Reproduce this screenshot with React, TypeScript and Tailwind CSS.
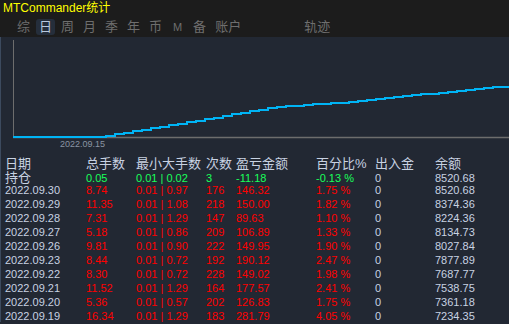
const rows: [string, string, string, string, string, string, string][] = [
  ["2022.09.30", "8.74", "0.01 | 0.97", "176", "146.32", "1.75 %", "8520.68"],
  ["2022.09.29", "11.35", "0.01 | 1.08", "218", "150.00", "1.82 %", "8374.36"],
  ["2022.09.28", "7.31", "0.01 | 1.29", "147", "89.63", "1.10 %", "8224.36"],
  ["2022.09.27", "5.18", "0.01 | 0.86", "209", "106.89", "1.33 %", "8134.73"],
  ["2022.09.26", "9.81", "0.01 | 0.90", "222", "149.95", "1.90 %", "8027.84"],
  ["2022.09.23", "8.44", "0.01 | 0.72", "192", "190.12", "2.47 %", "7877.89"],
  ["2022.09.22", "8.30", "0.01 | 0.72", "228", "149.02", "1.98 %", "7687.77"],
  ["2022.09.21", "11.52", "0.01 | 1.29", "164", "177.57", "2.41 %", "7538.75"],
  ["2022.09.20", "5.36", "0.01 | 0.57", "202", "126.83", "1.75 %", "7361.18"],
  ["2022.09.19", "16.34", "0.01 | 1.29", "183", "281.79", "4.05 %", "7234.35"],
];

const tabs = ["综", "日", "周", "月", "季", "年", "币", "M", "备", "账户"];

const font = { fontFamily: '"Liberation Sans", "Noto Sans CJK SC", sans-serif' };

// equity curve, in page coordinates (chart top = 37)
const knots: [number, number][] = [
  [106, 137],
  [150, 130],
  [285, 107],
  [350, 102.5],
  [509, 86.5],
];

function yAt(x: number) {
  for (let i = 0; i < knots.length - 1; i++) {
    const [x0, y0] = knots[i];
    const [x1, y1] = knots[i + 1];
    if (x >= x0 && x <= x1) return y0 + ((y1 - y0) * (x - x0)) / (x1 - x0);
  }
  return knots[knots.length - 1][1];
}

function stepPath() {
  let d = `M13 ${137 - 37} H106`;
  for (let x = 106; x < 509; x += 9) {
    const y = Math.round(yAt(x + 9)) - 37;
    d += ` V${y} H${Math.min(x + 9, 509)}`;
  }
  return d;
}

const grid =
  "grid grid-cols-[81px_50px_70px_30px_80px_59px_60px_1fr] h-[14px] items-center whitespace-nowrap";

export default function App() {
  return (
    <div className="w-[509px] h-[324px] overflow-hidden bg-[#222833]" style={font}>
      {/* top bar */}
      <div className="h-[37px] bg-[#1c1c1c] px-[3px]">
        <div className="text-[12px] leading-[17px] text-[#ffff00]">MTCommander统计</div>
        <div className="mt-[2px] flex items-center text-[13px] leading-[16px] text-[#6e6e6e]">
          <div className="flex items-center gap-[3px] pl-[11px]">
            {tabs.map((t) => (
              <span
                key={t}
                className={
                  t === "日"
                    ? "rounded-[3px] bg-[#252e3b] px-[3px] text-[#b9c9de]"
                    : t === "M"
                      ? "w-[19px] text-center text-[11px]"
                      : "px-[3px]"
                }
              >
                {t}
              </span>
            ))}
          </div>
          <span className="ml-[60px]">轨迹</span>
        </div>
      </div>

      <div className="border-l border-[#3c4a5e]">
        {/* chart */}
        <svg width="508" height="117" viewBox="1 0 508 117" className="block">
          <line x1="13.5" y1="3" x2="13.5" y2="100" stroke="#6d6d6d" strokeWidth="1" />
          <line x1="13" y1="100.5" x2="509" y2="100.5" stroke="#6d6d6d" strokeWidth="1.5" />
          <path d={stepPath()} fill="none" stroke="#00b4f5" strokeWidth="2.5" shapeRendering="crispEdges" />
          <text x="60" y="110" fontSize="9" fill="#8a94a2" style={font}>
            2022.09.15
          </text>
        </svg>

        {/* table */}
        <div className="pl-[4px] text-[11px] text-[#c8d2e2]">
          <div className={`${grid} text-[13px]`}>
            <span>日期</span>
            <span>总手数</span>
            <span>最小大手数</span>
            <span>次数</span>
            <span>盈亏金额</span>
            <span>百分比%</span>
            <span>出入金</span>
            <span>余额</span>
          </div>
          <div className={grid}>
            <span className="text-[13px]">持仓</span>
            <span className="text-[#19ff5a]">0.05</span>
            <span className="text-[#19ff5a]">0.01 | 0.02</span>
            <span className="text-[#19ff5a]">3</span>
            <span className="text-[#19ff5a]">-11.18</span>
            <span className="text-[#19ff5a]">-0.13 %</span>
            <span>0</span>
            <span>8520.68</span>
          </div>
          {rows.map((r) => (
            <div key={r[0]} className={grid}>
              <span>{r[0]}</span>
              <span className="text-[#ff0000]">{r[1]}</span>
              <span className="text-[#ff0000]">{r[2]}</span>
              <span className="text-[#ff0000]">{r[3]}</span>
              <span className="text-[#ff0000]">{r[4]}</span>
              <span className="text-[#ff0000]">{r[5]}</span>
              <span>0</span>
              <span>{r[6]}</span>
            </div>
          ))}
        </div>
      </div>
    </div>
  );
}
